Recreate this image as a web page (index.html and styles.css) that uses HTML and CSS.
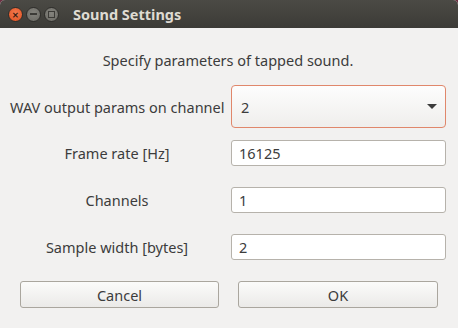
FILE: index.html
```html
<!DOCTYPE html>
<html lang="en">

<head>
    <meta charset="UTF-8">
    <meta name="viewport" content="width=device-width, initial-scale=1.0">
    <title>Sound Settings</title>
    <link rel="stylesheet" href="styles.css">
</head>

<body>
    <div class="window">
        <div class="titlebar">
            <div class="controls">
                <span class="ctl ctl-close">&#x2715;</span>
                <span class="ctl ctl-min"><i class="bar"></i></span>
                <span class="ctl ctl-max"><i class="box"></i></span>
            </div>
            <span class="title">Sound Settings</span>
        </div>

        <div class="content">
            <p class="intro">Specify parameters of tapped sound.</p>

            <div class="form">
                <div class="row row-combo">
                    <label class="label">WAV output params on channel</label>
                    <div class="combo">
                        <span>2</span>
                        <span class="arrow"></span>
                    </div>
                </div>

                <div class="row">
                    <label class="label">Frame rate [Hz]</label>
                    <input class="entry" type="text" value="16125">
                </div>

                <div class="row">
                    <label class="label">Channels</label>
                    <input class="entry" type="text" value="1">
                </div>

                <div class="row">
                    <label class="label">Sample width [bytes]</label>
                    <input class="entry" type="text" value="2">
                </div>
            </div>

            <div class="buttons">
                <button>Cancel</button>
                <button>OK</button>
            </div>
        </div>
    </div>
</body>

</html>
```

FILE: styles.css
```css
html, body {
    margin: 0;
    padding: 0;
    background-color: #6d3043;
}

body {
    font-family: "Noto Sans", "Open Sans", sans-serif;
    font-size: 14.5px;
    color: #3c3c3c;
}

.window {
    width: 458px;
    height: 328px;
    background-color: #f2f1f0;
    border-radius: 5px 5px 0 0;
    overflow: hidden;
}

.titlebar {
    height: 28px;
    display: flex;
    align-items: center;
    background: linear-gradient(#4b4a45, #3c3b37);
}

.controls {
    display: flex;
    gap: 3px;
    padding-left: 8px;
}

.ctl {
    width: 15px;
    height: 15px;
    border-radius: 50%;
    display: flex;
    align-items: center;
    justify-content: center;
    box-sizing: border-box;
    border: 1px solid #2f2e2b;
}

.ctl-close {
    background: radial-gradient(circle at 50% 40%, #f47a50, #e0501e);
    color: #3a1d12;
    font-size: 8px;
    font-weight: bold;
}

.ctl-min,
.ctl-max {
    background: radial-gradient(circle at 50% 40%, #85847e, #6a6963);
}

.bar {
    width: 7px;
    height: 2px;
    background-color: #3c3b37;
}

.box {
    width: 5px;
    height: 5px;
    border: 1px solid #3c3b37;
}

.title {
    margin-left: 14px;
    color: #dfdbd2;
    font-weight: bold;
    font-size: 14.5px;
}

.content {
    padding: 0 12px 0 10px;
}

.intro {
    margin: 23px 0 0;
    height: 19px;
    line-height: 19px;
    text-align: center;
}

.form {
    display: flex;
    flex-direction: column;
    gap: 21px;
    margin-top: 15px;
}

.row {
    display: grid;
    grid-template-columns: 214px 215px;
    column-gap: 7px;
    align-items: center;
}

.row-combo {
    margin-bottom: -9px;
}

.label {
    text-align: center;
    white-space: nowrap;
}

.combo {
    height: 43px;
    box-sizing: border-box;
    border: 1px solid #e0876b;
    border-radius: 4px;
    background: linear-gradient(#fdfdfd, #efeeec);
    display: flex;
    align-items: center;
    justify-content: space-between;
    padding: 0 8px 0 9px;
}

.arrow {
    width: 0;
    height: 0;
    border-left: 5px solid transparent;
    border-right: 5px solid transparent;
    border-top: 5px solid #3c3c3c;
}

.entry {
    height: 26px;
    box-sizing: border-box;
    border: 1px solid #b6b2ab;
    border-radius: 3px;
    background-color: #ffffff;
    font-family: inherit;
    font-size: 14.5px;
    color: #3c3c3c;
    padding: 0 7px;
    margin: 0;
}

.buttons {
    display: grid;
    grid-template-columns: 199px 200px;
    column-gap: 19px;
    padding-left: 10px;
    margin-top: 21px;
}

button {
    height: 27px;
    border: 1px solid #aaa69e;
    border-radius: 3px;
    background: linear-gradient(#fbfbfa, #ebeae8);
    font-family: inherit;
    font-size: 14.5px;
    color: #3c3c3c;
}
```
